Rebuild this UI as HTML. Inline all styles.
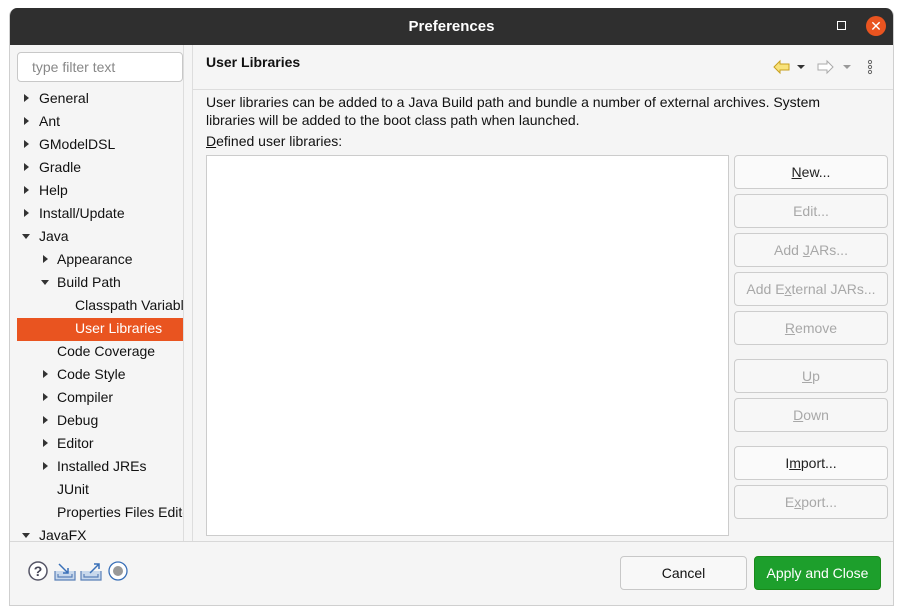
<!DOCTYPE html>
<html><head><style>
*{box-sizing:border-box;margin:0;padding:0}
body{width:903px;height:614px;background:#fff;font-family:"Liberation Sans",sans-serif;font-size:14px;color:#111;position:relative;overflow:hidden}
.win{position:absolute;left:9px;top:8px;width:885px;height:598px;background:#f5f5f5;border:1px solid #cfcfcf;border-top:none;border-radius:8px 8px 0 0;overflow:hidden}
.title{position:absolute;left:0;top:0;width:100%;height:37px;background:#2f2f2f;color:#fff;font-weight:bold;font-size:15px;text-align:center;line-height:37px}
.abs{position:absolute}
.left{position:absolute;left:0;top:37px;width:183px;height:496px;background:#f5f5f5;border-right:1px solid #ddd}
.filter{position:absolute;left:7px;top:7px;width:166px;height:30px;border:1px solid #c8c8c8;border-radius:4px;background:#fff;color:#888;padding-left:14px;line-height:28px;font-size:14px}
.it{position:absolute;height:23px;line-height:23px;white-space:nowrap}
.tri{position:absolute;width:0;height:0}
.tr{border-left:5px solid #333;border-top:4px solid transparent;border-bottom:4px solid transparent}
.td{border-top:5px solid #333;border-left:4px solid transparent;border-right:4px solid transparent}
.btn{position:absolute;left:724px;width:154px;height:34px;border:1px solid #cdcdcd;border-radius:4px;background:#f7f7f7;text-align:center;line-height:32px;color:#a8a8a8}
.btn.en{color:#222;background:#fafafa}
u{text-decoration:underline}
</style></head><body>
<div class="win">
<div class="title">Preferences</div>
<div class="abs" style="left:827px;top:13px;width:9px;height:9px;border:1.5px solid #fff"></div>
<div class="abs" style="left:856px;top:8px;width:20px;height:20px;border-radius:50%;background:#e95420;color:#fff;text-align:center;line-height:20px;font-size:14px">✕</div>
<div class="left">
<div class="filter">type filter text</div>
</div>
<div class="abs" style="left:0;top:81px;width:173px;height:452px;overflow:hidden">
<div class="tri tr" style="left:14px;top:5px"></div><div class="it" style="left:29px;top:-2px">General</div>
<div class="tri tr" style="left:14px;top:28px"></div><div class="it" style="left:29px;top:21px">Ant</div>
<div class="tri tr" style="left:14px;top:51px"></div><div class="it" style="left:29px;top:44px">GModelDSL</div>
<div class="tri tr" style="left:14px;top:74px"></div><div class="it" style="left:29px;top:67px">Gradle</div>
<div class="tri tr" style="left:14px;top:97px"></div><div class="it" style="left:29px;top:90px">Help</div>
<div class="tri tr" style="left:14px;top:120px"></div><div class="it" style="left:29px;top:113px">Install/Update</div>
<div class="tri td" style="left:12px;top:145px"></div><div class="it" style="left:29px;top:136px">Java</div>
<div class="tri tr" style="left:33px;top:166px"></div><div class="it" style="left:47px;top:159px">Appearance</div>
<div class="tri td" style="left:31px;top:191px"></div><div class="it" style="left:47px;top:182px">Build Path</div>
<div class="it" style="left:65px;top:205px">Classpath Variables</div>
<div class="abs" style="left:7px;top:229px;width:166px;height:23px;background:#e95420"></div>
<div class="it" style="left:65px;top:228px;color:#fff">User Libraries</div>
<div class="it" style="left:47px;top:251px">Code Coverage</div>
<div class="tri tr" style="left:33px;top:281px"></div><div class="it" style="left:47px;top:274px">Code Style</div>
<div class="tri tr" style="left:33px;top:304px"></div><div class="it" style="left:47px;top:297px">Compiler</div>
<div class="tri tr" style="left:33px;top:327px"></div><div class="it" style="left:47px;top:320px">Debug</div>
<div class="tri tr" style="left:33px;top:350px"></div><div class="it" style="left:47px;top:343px">Editor</div>
<div class="tri tr" style="left:33px;top:373px"></div><div class="it" style="left:47px;top:366px">Installed JREs</div>
<div class="it" style="left:47px;top:389px">JUnit</div>
<div class="it" style="left:47px;top:412px">Properties Files Editor</div>
<div class="tri td" style="left:12px;top:444px"></div><div class="it" style="left:29px;top:435px">JavaFX</div>
</div>
<div class="abs" style="left:173px;top:37px;width:1px;height:496px;background:#ddd"></div>
<div class="abs" style="left:196px;top:46px;font-weight:bold;font-size:14px">User Libraries</div>
<svg class="abs" style="left:760px;top:50px" width="110" height="18">
<path d="M4 9 L10 3 L10 6 L19 6 L19 12 L10 12 L10 15 Z" fill="#f8e27a" stroke="#c8a020" stroke-width="1"/>
<path d="M27 7 L35 7 L31 11 Z" fill="#333"/>
<path d="M63 9 L57 3 L57 6 L48 6 L48 12 L57 12 L57 15 Z" fill="#fff" stroke="#aaa" stroke-width="1"/>
<path d="M73 7 L81 7 L77 11 Z" fill="#999"/>
<circle cx="100" cy="4" r="1.6" fill="none" stroke="#666"/><circle cx="100" cy="9" r="1.6" fill="none" stroke="#666"/><circle cx="100" cy="14" r="1.6" fill="none" stroke="#666"/>
</svg>
<div class="abs" style="left:183px;top:81px;width:700px;height:1px;background:#ddd"></div>
<div class="abs" style="left:196px;top:85px;width:655px;line-height:18px">User libraries can be added to a Java Build path and bundle a number of external archives. System libraries will be added to the boot class path when launched.</div>
<div class="abs" style="left:196px;top:125px"><u>D</u>efined user libraries:</div>
<div class="abs" style="left:196px;top:147px;width:523px;height:381px;background:#fff;border:1px solid #ccc"></div>
<div class="btn en" style="top:147px"><u>N</u>ew...</div>
<div class="btn" style="top:186px">Edit...</div>
<div class="btn" style="top:225px">Add <u>J</u>ARs...</div>
<div class="btn" style="top:264px">Add E<u>x</u>ternal JARs...</div>
<div class="btn" style="top:303px"><u>R</u>emove</div>
<div class="btn" style="top:351px"><u>U</u>p</div>
<div class="btn" style="top:390px"><u>D</u>own</div>
<div class="btn en" style="top:438px">I<u>m</u>port...</div>
<div class="btn" style="top:477px">E<u>x</u>port...</div>
<div class="abs" style="left:0;top:533px;width:885px;height:1px;background:#d8d8d8"></div>
<svg class="abs" style="left:17px;top:551px" width="110" height="26">
<circle cx="11" cy="12" r="9" fill="#fff" stroke="#556" stroke-width="1.5"/>
<text x="11" y="17" font-size="14" font-weight="bold" text-anchor="middle" fill="#445" font-family="Liberation Sans">?</text>
<path d="M28 12 V21 H48 V12 M31 15 V18 H45 V15" fill="#c8d8ec" stroke="#5a80b8" stroke-width="1.2"/>
<path d="M32 5 L41 14 M41 9 V14 H36" fill="none" stroke="#3a70b8" stroke-width="1.5"/>
<path d="M54 12 V21 H74 V12 M57 15 V18 H71 V15" fill="#c8d8ec" stroke="#5a80b8" stroke-width="1.2"/>
<path d="M63 14 L72 5 M67 5 H72 V10" fill="none" stroke="#3a70b8" stroke-width="1.5"/>
<circle cx="91" cy="12" r="9" fill="#fff" stroke="#3a70b8" stroke-width="1.3"/>
<circle cx="91" cy="12" r="5" fill="#999"/>
</svg>
<div class="abs" style="left:610px;top:548px;width:127px;height:34px;border:1px solid #c8c8c8;border-radius:4px;background:#f8f8f8;text-align:center;line-height:32px">Cancel</div>
<div class="abs" style="left:744px;top:548px;width:127px;height:34px;border:1px solid #1a8a1a;border-radius:4px;background:#1d9f2c;color:#fff;text-align:center;line-height:32px">Apply and Close</div>
</div>
</body></html>
